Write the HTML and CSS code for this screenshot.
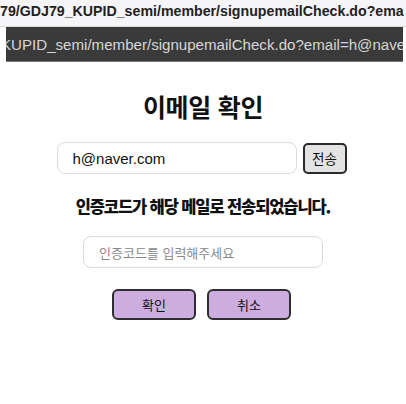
FILE: index.html
```html
<!DOCTYPE html>
<html lang="ko">
<head>
<meta charset="utf-8">
<link rel="stylesheet" href="styles.css">
</head>
<body>
<div class="url-top"><span class="url-text">79/GDJ79_KUPID_semi/member/signupemailCheck.do?ema</span></div>
<div class="url-wrap"><div class="url-dark"><span class="url-text">KUPID_semi/member/signupemailCheck.do?email=h@nave</span></div></div>
<main class="page">
  <h1 class="title">이메일 확인</h1>
  <div class="row">
    <input class="email" type="text" value="h@naver.com">
    <button class="send">전송</button>
  </div>
  <p class="msg">인증코드가 해당 메일로 전송되었습니다.</p>
  <input class="code" type="text" placeholder="인증코드를 입력해주세요">
  <div class="actions">
    <button class="act">확인</button>
    <button class="act">취소</button>
  </div>
</main>
</body>
</html>
```
FILE: styles.css
```css
html, body { margin: 0; padding: 0; background: #fff; }
body { font-family: "Liberation Sans", "Noto Sans CJK KR", sans-serif; width: 406px; overflow: hidden; }
.url-top {
  height: 26px; line-height: 23px; background: #f5f5f7; color: #222;
  font-weight: bold; font-size: 14.2px; white-space: nowrap; overflow: hidden;
  border-bottom: 1px solid #d8d8d8;
}
.url-wrap { padding: 0 3px 0 6px; }
.url-dark {
  height: 34px; line-height: 36px; background: #3a3a3a; color: #d6d6d6;
  font-size: 15.1px; white-space: nowrap; overflow: hidden; text-indent: -5px;
  border-bottom: 1px solid #777;
}
.page { display: flex; flex-direction: column; align-items: center; }
.title {
  font-family: "Noto Sans CJK KR", sans-serif; font-size: 25px; font-weight: 700;
  margin: 27px 0 0; line-height: 34px; letter-spacing: -0.3px; color: #111;
}
.row { display: flex; align-items: center; gap: 6px; margin-top: 19px; margin-left: -3px; }
.email {
  box-sizing: border-box; width: 240px; height: 32px; border: 1px solid #dcdcdc; border-radius: 8px;
  padding: 0 15px; font-family: "Liberation Sans", sans-serif; font-size: 15px; color: #111; outline: none;
}
.send {
  box-sizing: border-box; width: 44px; height: 31px; border: 2px solid #2a2a2a; border-radius: 5px;
  background: #e3e3e3; font-family: "Noto Sans CJK KR", sans-serif; font-size: 13.5px; padding: 0; color: #111;
}
.msg {
  font-family: "Noto Sans CJK KR", sans-serif; font-weight: 900; font-size: 16.5px; letter-spacing: -1.1px;
  margin: 20px 0 0; line-height: 24px; color: #111;
}
.code {
  box-sizing: border-box; width: 240px; height: 32px; border: 1px solid #dcdcdc; border-radius: 8px;
  padding: 0 15px; font-family: "Noto Sans CJK KR", sans-serif; font-size: 13px; margin-top: 18px; outline: none;
}
.code::placeholder { color: #8a8a8a; }
.actions { display: flex; gap: 11px; margin-top: 21px; margin-left: -3px; }
.act {
  box-sizing: border-box; width: 84px; height: 31px; border: 2px solid #2e2e2e; border-radius: 6px;
  background: #cdade0; font-family: "Noto Sans CJK KR", sans-serif; font-size: 13px; color: #111; padding: 0;
}
```
